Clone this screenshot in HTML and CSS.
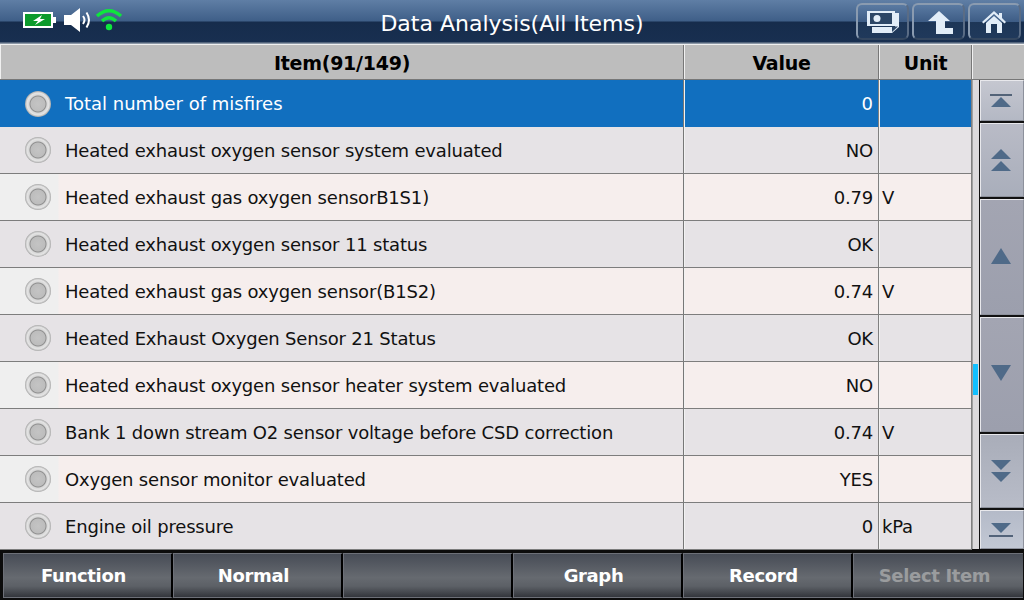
FILE: index.html
```html
<!DOCTYPE html>
<html>
<head>
    <title>Data Analysis</title>
    <link rel="stylesheet" href="styles.css">
</head>
<body>
    <div class="app">
        <div class="topbar">
            <div class="status-icons">
                <svg class="battery" width="34" height="16" viewBox="0 0 34 16">
                    <rect x="1" y="1" width="28" height="14" fill="#0c9a2c" stroke="#fff" stroke-width="2"/>
                    <rect x="29.500" y="5" width="3.500" height="6" fill="#fff"/>
                    <path d="M19 3 L10 9 L15 9 L12 13 L22 7 L17 7 Z" fill="#fff"/>
                </svg>
                <svg class="speaker" width="29" height="26" viewBox="0 0 29 26">
                    <path d="M1 8 H8 L17 1 V25 L8 18 H1 Z" fill="#fff"/>
                    <path d="M20 9 Q23 13 20 17" fill="none" stroke="#fff" stroke-width="2"/>
                    <path d="M23.500 5.500 Q28.500 13 23.500 20.500" fill="none" stroke="#fff" stroke-width="2"/>
                </svg>
                <svg class="wifi" width="28" height="24" viewBox="0 0 28 24">
                    <path d="M2 9 Q14 -1.500 26 9" fill="none" stroke="#0ee63c" stroke-width="3.500"/>
                    <path d="M7 14 Q14 7.500 21 14" fill="none" stroke="#0ee63c" stroke-width="3.500"/>
                    <circle cx="14" cy="20" r="3.200" fill="#0ee63c"/>
                </svg>
            </div>
            <div class="title">Data Analysis(All Items)</div>
            <div class="top-buttons">
                <button class="top-btn photo">
                    <svg width="36" height="24" viewBox="0 0 36 24">
                        <path d="M6 17 H29 V3 H33 V17 L26 23 H6 Z" fill="#e2edf8"/>
                        <rect x="1" y="1" width="28" height="15" fill="#e2edf8"/>
                        <rect x="4" y="3" width="22" height="11" fill="#2c4666"/>
                        <circle cx="11" cy="8.500" r="3.500" fill="#e2edf8"/>
                        <path d="M26 22 L32 16.500 H26 Z" fill="#2c4666"/>
                    </svg>
                </button>
                <button class="top-btn back">
                    <svg width="26" height="24" viewBox="0 0 26 24">
                        <path d="M11 1 L22 11 H17 V18 H25 V24 H8 V11 H0 Z" fill="#e2edf8"/>
                    </svg>
                </button>
                <button class="top-btn home">
                    <svg width="26" height="24" viewBox="0 0 26 24">
                        <path d="M13 1 L18 5.500 V3 H21 V8 L25 12 L23.500 13.500 L13 4 L2.500 13.500 L1 12 Z" fill="#e2edf8"/>
                        <path d="M13 6 L21 13 V23 H16 V14 H10 V23 H5 V13 Z" fill="#e2edf8"/>
                    </svg>
                </button>
            </div>
        </div>

        <div class="main">
            <div class="table">
                <div class="row head">
                    <div class="cell">Item(91/149)</div>
                    <div class="cell">Value</div>
                    <div class="cell">Unit</div>
                    <div class="cell last"></div>
                </div>
                <div class="row selected">
                    <div class="cell name"><span class="radio"></span>Total number of misfires</div>
                    <div class="cell value">0</div>
                    <div class="cell unit"></div>
                </div>
                <div class="row">
                    <div class="cell name"><span class="radio"></span>Heated exhaust oxygen sensor system evaluated</div>
                    <div class="cell value">NO</div>
                    <div class="cell unit"></div>
                </div>
                <div class="row alt">
                    <div class="cell name"><span class="radio"></span>Heated exhaust gas oxygen sensorB1S1)</div>
                    <div class="cell value">0.79</div>
                    <div class="cell unit">V</div>
                </div>
                <div class="row">
                    <div class="cell name"><span class="radio"></span>Heated exhaust oxygen sensor 11 status</div>
                    <div class="cell value">OK</div>
                    <div class="cell unit"></div>
                </div>
                <div class="row alt">
                    <div class="cell name"><span class="radio"></span>Heated exhaust gas oxygen sensor(B1S2)</div>
                    <div class="cell value">0.74</div>
                    <div class="cell unit">V</div>
                </div>
                <div class="row">
                    <div class="cell name"><span class="radio"></span>Heated Exhaust Oxygen Sensor 21 Status</div>
                    <div class="cell value">OK</div>
                    <div class="cell unit"></div>
                </div>
                <div class="row alt">
                    <div class="cell name"><span class="radio"></span>Heated exhaust oxygen sensor heater system evaluated</div>
                    <div class="cell value">NO</div>
                    <div class="cell unit"></div>
                </div>
                <div class="row">
                    <div class="cell name"><span class="radio"></span>Bank 1 down stream O2 sensor voltage before CSD correction</div>
                    <div class="cell value">0.74</div>
                    <div class="cell unit">V</div>
                </div>
                <div class="row alt">
                    <div class="cell name"><span class="radio"></span>Oxygen sensor monitor evaluated</div>
                    <div class="cell value">YES</div>
                    <div class="cell unit"></div>
                </div>
                <div class="row">
                    <div class="cell name"><span class="radio"></span>Engine oil pressure</div>
                    <div class="cell value">0</div>
                    <div class="cell unit">kPa</div>
                </div>
            </div>

            <div class="scrollbar">
                <div class="track"><div class="thumb"></div></div>
                <div class="scroll-buttons">
                    <button class="scroll-btn first">
                        <svg width="22" height="14" viewBox="0 0 22 14"><path d="M0 1 H22" stroke="#2f435c" stroke-width="1.500"/><path d="M11 3 L21 13 H1 Z" fill="#4f6a88"/></svg>
                    </button>
                    <button class="scroll-btn page-up">
                        <svg width="20" height="22" viewBox="0 0 20 22"><path d="M10 0 L20 10 H0 Z" fill="#4f6a88"/><path d="M10 12 L20 22 H0 Z" fill="#4f6a88"/></svg>
                    </button>
                    <button class="scroll-btn step-up">
                        <svg width="20" height="16" viewBox="0 0 20 16"><path d="M10 0 L20 16 H0 Z" fill="#4f6a88"/></svg>
                    </button>
                    <button class="scroll-btn step-down">
                        <svg width="20" height="16" viewBox="0 0 20 16"><path d="M0 0 H20 L10 16 Z" fill="#4f6a88"/></svg>
                    </button>
                    <button class="scroll-btn page-down">
                        <svg width="20" height="22" viewBox="0 0 20 22"><path d="M0 0 H20 L10 10 Z" fill="#4f6a88"/><path d="M0 12 H20 L10 22 Z" fill="#4f6a88"/></svg>
                    </button>
                    <button class="scroll-btn last">
                        <svg width="24" height="14" viewBox="0 0 24 14"><path d="M2 0 H22 L12 10 Z" fill="#4f6a88"/><path d="M0 13 H24" stroke="#2f435c" stroke-width="1.500"/></svg>
                    </button>
                </div>
            </div>
        </div>

        <div class="bottombar">
            <button class="func-btn">Function</button>
            <button class="func-btn">Normal</button>
            <button class="func-btn"></button>
            <button class="func-btn">Graph</button>
            <button class="func-btn">Record</button>
            <button class="func-btn disabled">Select Item</button>
        </div>
    </div>
</body>
</html>
```

FILE: styles.css
```css
* {
    box-sizing: border-box;
}
html, body {
    margin: 0;
    padding: 0;
}
body {
    font-family: "DejaVu Sans", sans-serif;
    background-color: #000;
}
button {
    padding: 0;
    margin: 0;
    font-family: inherit;
    cursor: pointer;
}
.app {
    width: 1024px;
    height: 600px;
    display: flex;
    flex-direction: column;
    overflow: hidden;
}

/* top bar */
.topbar {
    height: 44px;
    flex: none;
    display: grid;
    grid-template-columns: 1fr auto 1fr;
    align-items: center;
    background: linear-gradient(to bottom, #5f7ea5 0, #3f5f88 21px, #162c4c 22px, #182f50 42px, #8b97a6 43px);
}
.status-icons {
    display: flex;
    align-items: flex-start;
    align-self: start;
    padding: 7px 0 0 23px;
}
.status-icons .battery {
    margin-top: 5px;
}
.status-icons .speaker {
    margin-left: 6px;
}
.status-icons .wifi {
    margin-left: 3px;
}
.title {
    color: #fff;
    font-size: 22px;
    padding-top: 2px;
}
.top-buttons {
    display: flex;
    justify-content: flex-end;
    gap: 3px;
    padding: 0 3px 1px 0;
}
.top-btn {
    width: 53px;
    height: 37px;
    display: flex;
    align-items: center;
    justify-content: center;
    border: 2px solid #8a9bb0;
    border-bottom-color: #33465f;
    border-right-color: #5a6c85;
    border-radius: 6px;
    background: linear-gradient(to bottom, #5a7aa2 0, #3e5d86 50%, #1d3657 51%, #20395b 100%);
}
.top-btn.photo {
    padding-left: 2px;
}
.top-btn.back {
    padding-left: 4px;
}
.top-btn.home {
    padding-right: 2px;
}

/* table */
.main {
    flex: 1;
    display: flex;
    background-color: #e0dee0;
    min-height: 0;
    position: relative;
}
.table {
    width: 972px;
    flex: none;
}
.row {
    display: grid;
    grid-template-columns: 684px 195px 93px;
    height: 47px;
    border-bottom: 1px solid #7d7d7d;
    font-size: 18px;
    letter-spacing: -0.18px;
    color: #111;
    background-color: #e6e3e6;
}
.row.alt {
    background: linear-gradient(to right, #efefef 0, #efefef 58px, #f6eeed 59px);
}
.row.selected {
    background-color: #116fbf;
    color: #fff;
    border-bottom: none;
    letter-spacing: 0;
}
.row.head {
    grid-template-columns: 684px 195px 93px 52px;
    width: 1024px;
    height: 36px;
    background-color: #bdbdbd;
    color: #000;
    font-weight: bold;
    font-size: 19px;
    letter-spacing: -0.25px;
    border-top: 1px solid #f0f0f0;
    border-bottom: 1px solid #777;
}
.cell {
    display: flex;
    align-items: center;
}
.head .cell {
    justify-content: center;
    padding-top: 2px;
    border-left: 1px solid #f0f0f0;
    border-right: 1px solid #777;
}
.head .cell.last {
    border-right: none;
}
.cell.name {
    padding-left: 25px;
    border-right: 1px solid #777;
}
.cell.value {
    justify-content: flex-end;
    padding-right: 5px;
    border-left: 1px solid #f2f2f2;
    border-right: 1px solid #808080;
}
.cell.unit {
    padding-left: 2px;
    border-left: 1px solid #f2f2f2;
    border-right: 1px solid #808080;
}
.radio {
    width: 26px;
    height: 26px;
    flex: none;
    margin-right: 14px;
    border-radius: 50%;
    background: radial-gradient(circle, #c4c4c4 0, #bdbdbd 7px, #8e8e8e 8px, #d8d8d8 9px, #e4e4e4 11px, #a8a8a8 13px);
}

/* scroll column */
.scrollbar {
    position: absolute;
    top: 36px;
    left: 972px;
    width: 52px;
    height: 469px;
    display: flex;
    background-color: #dcdadc;
    border-left: 1px solid #a0a0a0;
}
.track {
    width: 6px;
    flex: none;
    position: relative;
}
.thumb {
    position: absolute;
    left: 0;
    top: 284px;
    width: 5px;
    height: 31px;
    background-color: #13c0ff;
}
.scroll-buttons {
    flex: 1;
    display: flex;
    flex-direction: column;
    background-color: #111;
    gap: 2px;
    border-left: 1px solid #111;
}
.scroll-btn {
    display: flex;
    align-items: center;
    justify-content: center;
    padding-right: 2px;
    border: 1px solid #e8e8ec;
    border-right-color: #8d919c;
    border-bottom-color: #8d919c;
}
.scroll-btn.first {
    height: 41px;
    background: linear-gradient(to bottom, #c5c7d0, #b4b8c4);
}
.scroll-btn.page-up {
    height: 74px;
    padding-bottom: 1px;
    background: linear-gradient(to bottom, #b9bbc6, #a9aebb);
}
.scroll-btn.step-up {
    height: 116px;
    padding-bottom: 3px;
    background: linear-gradient(to bottom, #a3a5b2, #9c9fad);
}
.scroll-btn.step-down {
    height: 115px;
    padding-bottom: 3px;
    background: linear-gradient(to bottom, #a3a5b2, #9c9fad);
}
.scroll-btn.page-down {
    height: 74px;
    background: linear-gradient(to bottom, #a9adb9, #b8bcc8);
}
.scroll-btn.last {
    height: 39px;
    background: linear-gradient(to bottom, #b4bac8, #c2c8d4);
}

/* bottom bar */
.bottombar {
    height: 51px;
    flex: none;
    display: grid;
    grid-template-columns: repeat(6, 170px);
    padding: 4px 1px 2px 3px;
    background-color: #0c0c0c;
}
.func-btn {
    color: #fff;
    font-size: 18px;
    font-weight: bold;
    letter-spacing: -0.35px;
    padding-right: 8px;
    border: 1px solid #6d7078;
    border-left-width: 1px;
    border-right: 2px solid #000;
    background: linear-gradient(to bottom, #474c56 0, #666a70 55%, #5c6066 75%, #33363c 100%);
}
.func-btn.disabled {
    color: #9a9c9e;
    border-right: none;
}
```
